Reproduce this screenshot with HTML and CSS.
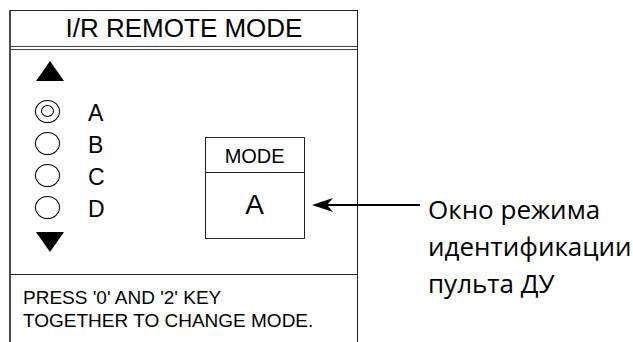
FILE: index.html
```html
<!DOCTYPE html>
<html lang="en">
<head>
  <meta charset="UTF-8">
  <title>I/R Remote Mode</title>
  <link rel="stylesheet" href="styles.css">
</head>
<body>

  <main class="sheet">

    <section class="panel">
      <h1 class="panel-title">I/R REMOTE MODE</h1>

      <div class="panel-body">
        <ul class="mode-list">
          <li class="mode-arrow">
            <svg width="28" height="20" viewBox="0 0 28 20"><polygon points="14,0 28,20 0,20"/></svg>
          </li>
          <li class="mode-item is-selected"><span class="radio"></span><span class="mode-letter">A</span></li>
          <li class="mode-item"><span class="radio"></span><span class="mode-letter">B</span></li>
          <li class="mode-item"><span class="radio"></span><span class="mode-letter">C</span></li>
          <li class="mode-item"><span class="radio"></span><span class="mode-letter">D</span></li>
          <li class="mode-arrow">
            <svg width="28" height="20" viewBox="0 0 28 20"><polygon points="0,0 28,0 14,20"/></svg>
          </li>
        </ul>

        <div class="mode-box">
          <div class="mode-box-label">MODE</div>
          <div class="mode-box-value">A</div>
        </div>
      </div>

      <p class="panel-foot">PRESS '0' AND '2' KEY<br>TOGETHER TO CHANGE MODE.</p>
    </section>

    <div class="note">
      <svg class="note-arrow" width="108" height="28" viewBox="0 0 108 28">
        <line x1="12" y1="14" x2="108" y2="14" stroke="#000" stroke-width="2"/>
        <polygon points="0,14 21,7 15,14 21,21"/>
      </svg>
      <p class="note-text">Окно режима<br>идентификации<br>пульта ДУ</p>
    </div>

  </main>

</body>
</html>
```

FILE: styles.css
```css
body {
  background: #fff;
  color: #000;
  font-family: "Liberation Sans", Arial, sans-serif;
  margin: 0;
}

.sheet {
  align-items: flex-start;
  display: flex;
  height: 342px;
  overflow: hidden;
  padding: 10px 0 0 9px;
  box-sizing: border-box;
}

.panel {
  border-left: 2px solid #4a4a4a;
  border-right: 1px solid #222;
  border-top: 1px solid #222;
  box-sizing: border-box;
  display: flex;
  flex-direction: column;
  flex: none;
  height: 340px;
  width: 349px;
}

.panel-title {
  border-bottom: 4px double #444;
  font-size: 26px;
  font-weight: normal;
  height: 35px;
  line-height: 35px;
  margin: 0;
  text-align: center;
}

.panel-body {
  display: flex;
  height: 224px;
}

.mode-list {
  list-style: none;
  margin: 0;
  padding: 11px 0 0 24px;
}

.mode-arrow {
  height: 20px;
  line-height: 0;
  padding-left: 1px;
}

.mode-arrow:first-child {
  margin-bottom: 14px;
}

.mode-arrow:last-child {
  margin-top: 9px;
}

.mode-item {
  align-items: center;
  display: flex;
  font-size: 23px;
  gap: 28px;
  height: 32px;
}

.radio {
  border: 1.5px solid #000;
  border-radius: 50%;
  box-sizing: border-box;
  display: grid;
  height: 23px;
  place-items: center;
  width: 25px;
}

.is-selected .radio::after {
  border: 1.5px solid #000;
  border-radius: 50%;
  box-sizing: border-box;
  content: "";
  height: 12px;
  width: 13px;
}

.mode-letter {
  margin-top: 5px;
}

.mode-box {
  border: 1.5px solid #222;
  box-sizing: border-box;
  height: 102px;
  margin: 87px 0 0 100px;
  text-align: center;
  width: 100px;
}

.mode-box-label {
  border-bottom: 1.5px solid #222;
  font-size: 20px;
  height: 34px;
  line-height: 36px;
}

.mode-box-value {
  font-size: 28px;
  line-height: 64px;
}

.panel-foot {
  border-top: 1px solid #222;
  font-size: 19px;
  line-height: 23px;
  margin: 0;
  padding: 11px 0 0 12px;
}

.note {
  align-items: flex-start;
  display: flex;
  gap: 8px;
  margin: 181px 0 0 -46px;
}

.note-arrow {
  flex: none;
}

.note-text {
  font-family: "Open Sans", "Noto Sans", sans-serif;
  font-size: 26px;
  line-height: 37px;
  margin: 0;
}
```
